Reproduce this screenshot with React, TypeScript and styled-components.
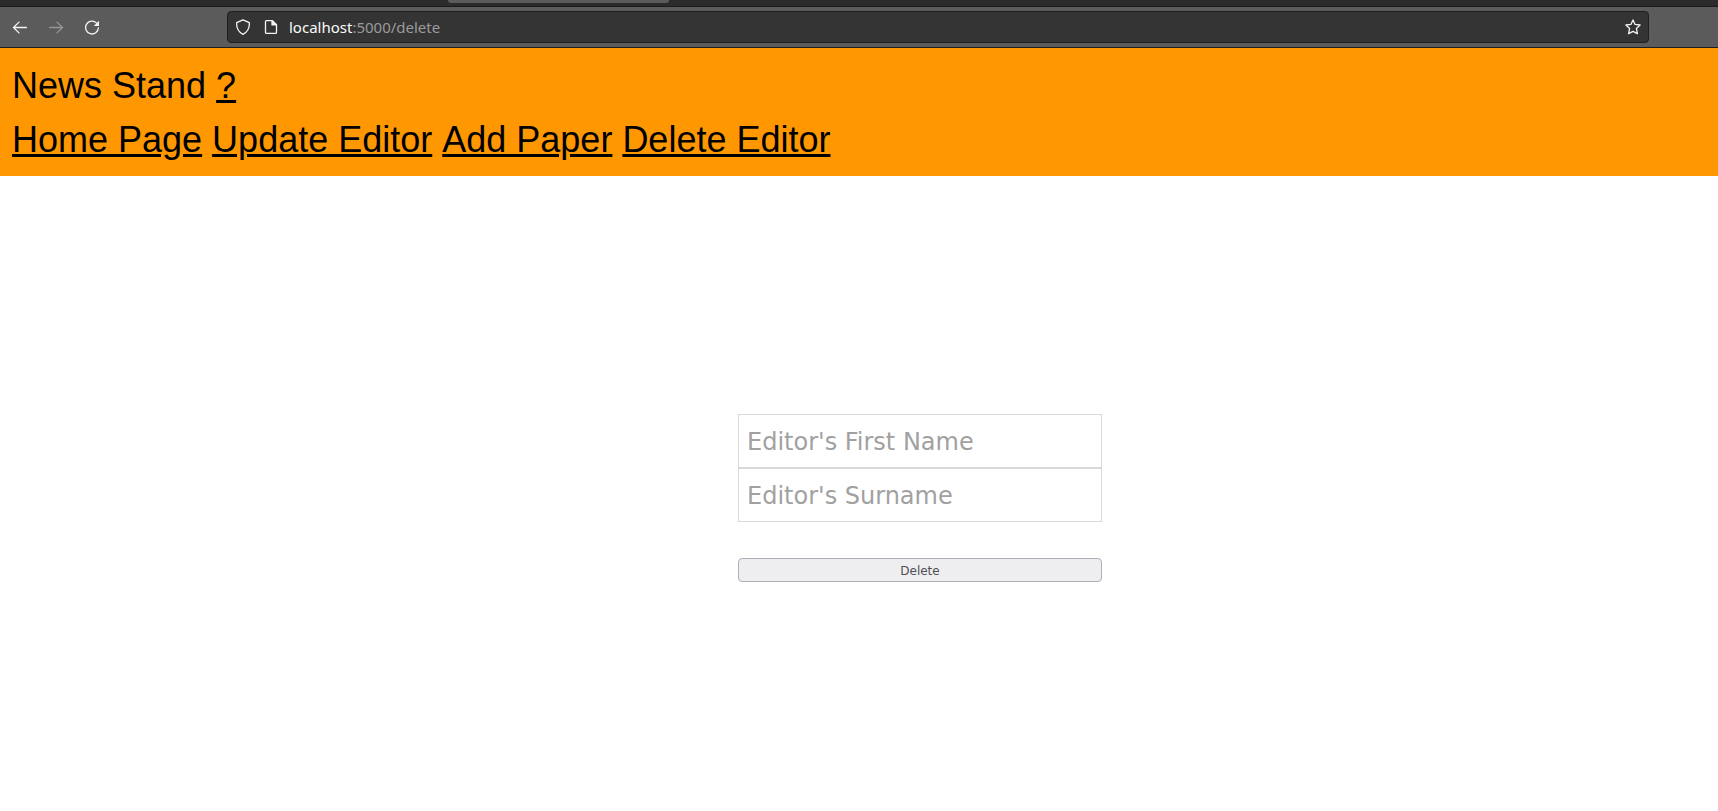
import React from 'react';
import styled, { createGlobalStyle } from 'styled-components';

const GlobalStyle = createGlobalStyle`
  *, *::before, *::after { box-sizing: border-box; }
  body { margin: 0; background: #fff; }
`;

const TabStrip = styled.div`
  display: flex;
  height: 7px;
  padding-left: 448px;
  background: #2b2b2b;
  border-bottom: 1px solid #1c1c1c;
`;

const ActiveTab = styled.div`
  width: 221px;
  height: 3px;
  border-radius: 0 0 4px 4px;
  background: #5b5b5b;
`;

const Toolbar = styled.div`
  display: flex;
  align-items: center;
  height: 41px;
  padding: 0 69px 0 8px;
  background: #5b5b5b;
  border-bottom: 1px solid #1f1f1f;
`;

const ToolButtons = styled.div`
  display: flex;
  gap: 12px;
  width: 219px;
`;

const IconButton = styled.button`
  display: flex;
  align-items: center;
  justify-content: center;
  width: 24px;
  height: 24px;
  padding: 0;
  border: 0;
  background: none;
  color: #f4f4f4;

  &:disabled { color: #959595; }
`;

const AddressBar = styled.div`
  display: flex;
  flex: 1;
  align-items: center;
  height: 32px;
  padding: 0 3px;
  border: 1px solid #202020;
  border-radius: 4px;
  background: #343434;
`;

const SiteIcons = styled.div`
  display: flex;
  gap: 4px;
  width: 58px;
`;

const Address = styled.div`
  flex: 1;
  color: #9b9b9b;
  font: 15px/20px "Noto Sans", sans-serif;
`;

const Host = styled.span`
  color: #fbfbfb;
`;

const Header = styled.header`
  padding: 11px 12px 9px;
  background: #ff9800;
  color: #000;
  font: 36px/54px "Liberation Sans", Arial, sans-serif;

  a { color: inherit; }
`;

const Nav = styled.nav`
  display: flex;
  flex-wrap: wrap;
  column-gap: 10px;
`;

const Main = styled.main`
  display: flex;
  justify-content: center;
  padding: 238px 0 0 122px;
`;

const Form = styled.form`
  display: flex;
  flex-direction: column;
  width: 364px;
`;

const Field = styled.input`
  height: 54px;
  padding: 2px 8px 0;
  border: 1px solid #d9d9d9;
  border-radius: 0;
  background: #fff;
  color: #222;
  font: 24px/28px "DejaVu Sans", sans-serif;

  &::placeholder { color: #a1a1a1; opacity: 1; }
`;

const SubmitButton = styled.button`
  height: 24px;
  margin-top: 36px;
  padding: 2px 0 0;
  border: 1px solid #aeaeb8;
  border-radius: 4px;
  background: #eeeef0;
  color: #505055;
  font: 12px/16px "DejaVu Sans", sans-serif;
`;

const Icon = ({ children }: { children: React.ReactNode }) => (
  <svg
    width="16"
    height="16"
    viewBox="0 0 16 16"
    fill="none"
    stroke="currentColor"
    strokeWidth="1.3"
    strokeLinecap="round"
    strokeLinejoin="round"
    aria-hidden="true"
  >
    {children}
  </svg>
);

export default function App() {
  return (
    <>
      <GlobalStyle />
      <TabStrip>
        <ActiveTab />
      </TabStrip>
      <Toolbar>
        <ToolButtons>
          <IconButton type="button" aria-label="Back">
            <Icon><path d="M14.4 8.5H1.6M7 3.1 1.5 8.5 7 13.9" /></Icon>
          </IconButton>
          <IconButton type="button" aria-label="Forward" disabled>
            <Icon><path d="M1.6 8.5h12.8M9 3.1 14.5 8.5 9 13.9" /></Icon>
          </IconButton>
          <IconButton type="button" aria-label="Reload">
            <Icon>
              <path d="M12.4 3.9A6.4 6.4 0 1 0 14.4 8.8" />
              <path d="M15 1.8v5.2H9.8z" fill="currentColor" stroke="none" />
            </Icon>
          </IconButton>
        </ToolButtons>
        <AddressBar>
          <SiteIcons>
            <IconButton type="button" aria-label="Tracking protection">
              <Icon><path d="M8 .8 14.3 3.6C14.7 8.5 12.6 13 8 15.3 3.4 13 1.3 8.5 1.7 3.6Z" /></Icon>
            </IconButton>
            <IconButton type="button" aria-label="Site information">
              <Icon>
                <path d="M3.5 1.6h6l4 4v7.8a1 1 0 0 1-1 1h-9a1 1 0 0 1-1-1V2.6a1 1 0 0 1 1-1Z" />
                <path d="M9 1.6v4.3h4.3z" fill="currentColor" />
              </Icon>
            </IconButton>
          </SiteIcons>
          <Address><Host>localhost</Host>:5000/delete</Address>
          <IconButton type="button" aria-label="Bookmark this page">
            <Icon><path d="m8 .9 2.1 4.5 5 .6-3.7 3.4 1 5.3L8 12.4l-4.4 2.3 1-5.3L.9 6l5-.6Z" /></Icon>
          </IconButton>
        </AddressBar>
      </Toolbar>
      <Header>
        <div>News Stand <a href="#about">?</a></div>
        <Nav>
          <a href="#home">Home Page</a>
          <a href="#update">Update Editor</a>
          <a href="#add">Add Paper</a>
          <a href="#delete">Delete Editor</a>
        </Nav>
      </Header>
      <Main>
        <Form onSubmit={(event) => event.preventDefault()}>
          <Field type="text" placeholder="Editor's First Name" aria-label="Editor's First Name" />
          <Field type="text" placeholder="Editor's Surname" aria-label="Editor's Surname" />
          <SubmitButton type="submit">Delete</SubmitButton>
        </Form>
      </Main>
    </>
  );
}
